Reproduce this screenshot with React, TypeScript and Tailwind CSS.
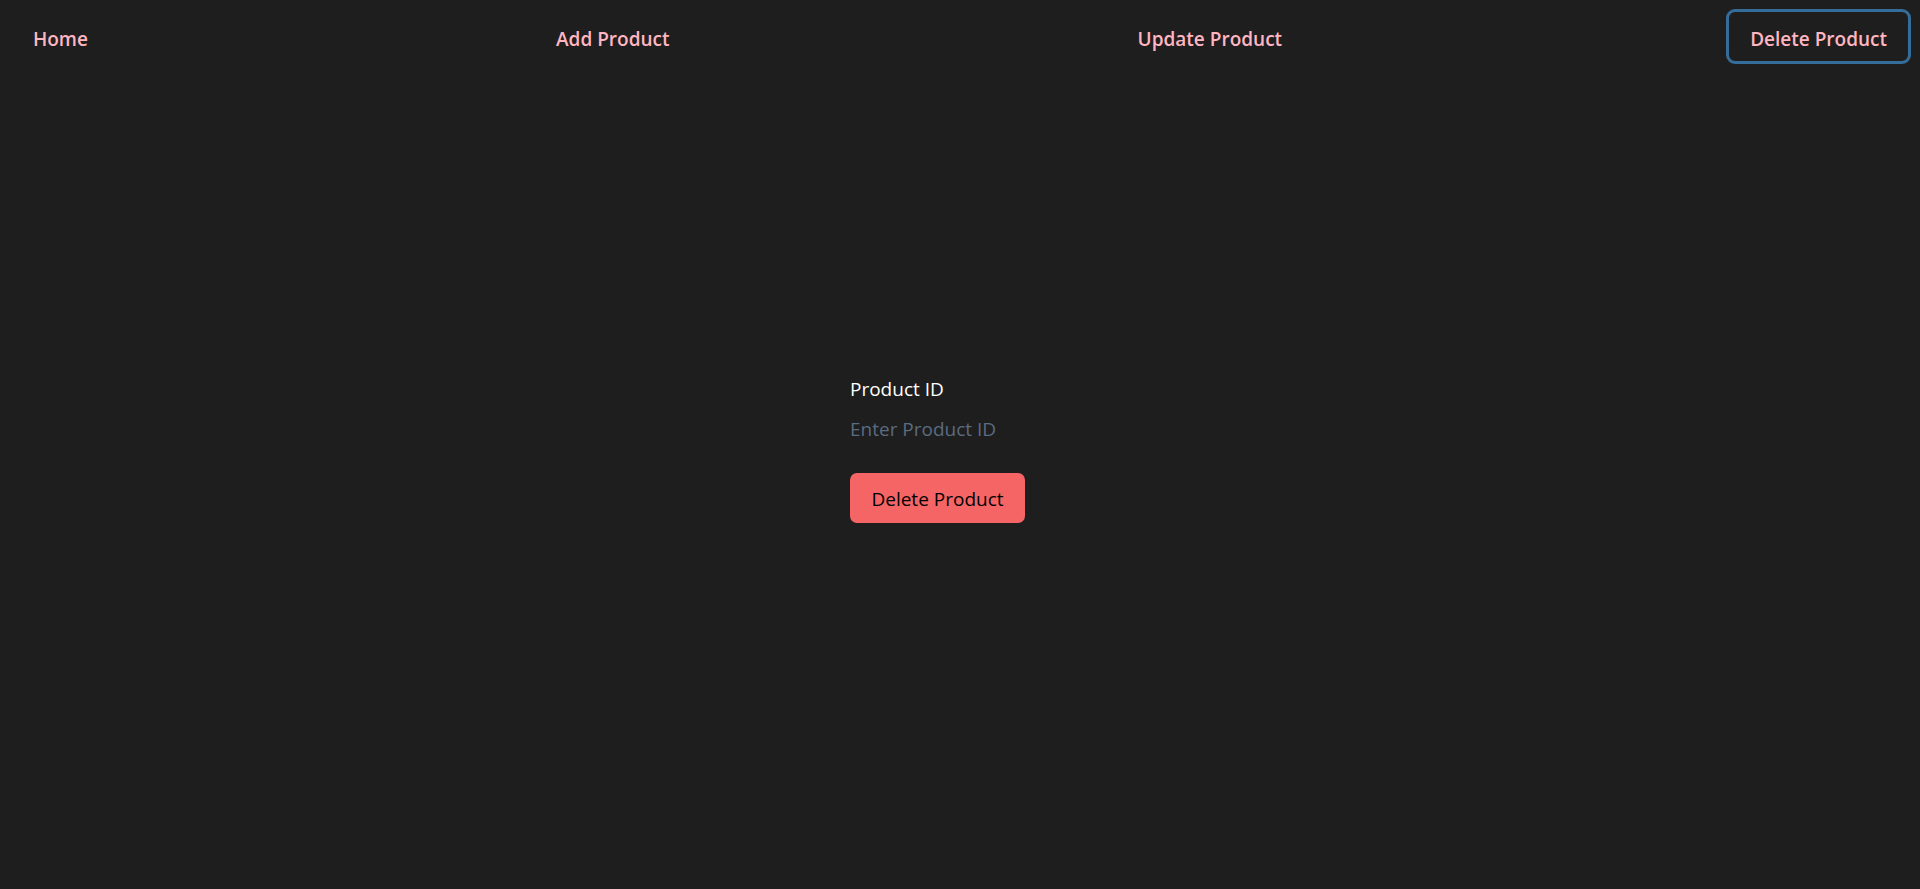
export default function App() {
  const items = ["Home", "Add Product", "Update Product", "Delete Product"];
  return (
    <div className="min-h-screen bg-[#1e1e1e] font-['Open_Sans',sans-serif]">
      <nav className="flex justify-between p-[9px]">
        {items.map((it, i) => (
          <a
            key={it}
            className={`flex h-[55px] items-center rounded-[9px] border-[3px] px-[21px] pt-[5px] text-[19px] font-semibold text-[#ffb6c1] ${
              i === 3 ? "border-[#356d9a]" : "border-transparent"
            }`}
          >
            {it}
          </a>
        ))}
      </nav>
      <div className="mx-auto mt-[302px] flex w-[220px] flex-col">
        <label className="text-[19px] leading-[28px] text-white">Product ID</label>
        <input
          placeholder="Enter Product ID"
          className="mt-[12px] h-[28px] bg-transparent text-[19px] text-white outline-none placeholder:text-[#5b6b80]"
        />
        <button className="mt-[30px] h-[50px] w-[175px] rounded-[7px] bg-[#f56565] pt-[2px] text-[19px] font-medium text-black">
          Delete Product
        </button>
      </div>
    </div>
  );
}
